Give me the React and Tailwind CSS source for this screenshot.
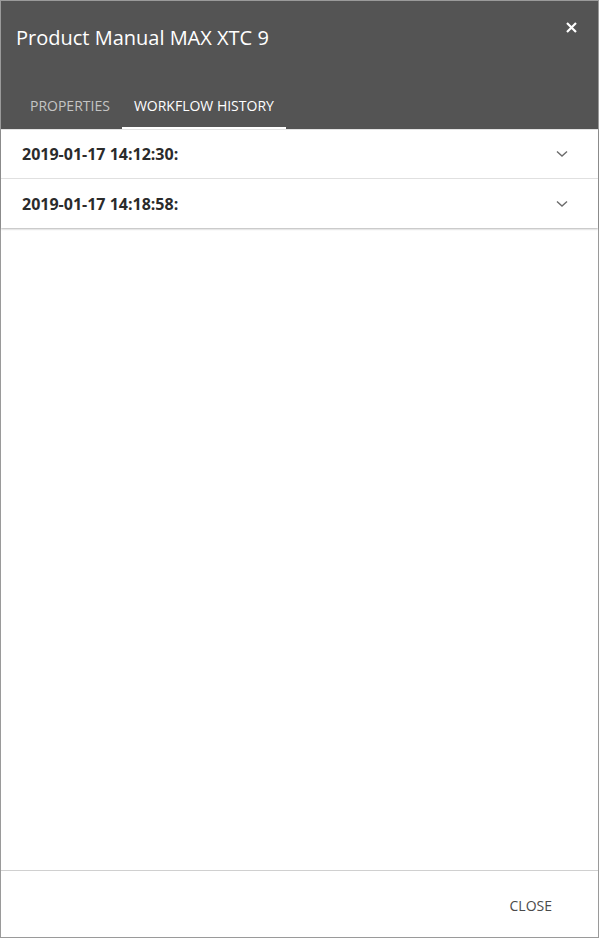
import React from 'react';

const entries = ['2019-01-17 14:12:30:', '2019-01-17 14:18:58:'];

const Chevron = () => (
    <svg width="12" height="8" viewBox="0 0 12 8" fill="none" className="text-[#6b6b6b]">
        <path d="M1 1.5 L6 6 L11 1.5" stroke="currentColor" strokeWidth="1.4" />
    </svg>
);

const App = () => {
    return (
        <div className="w-[599px] h-[938px] border border-[#9a9a9a] bg-white flex flex-col" style={{ fontFamily: '"Open Sans", sans-serif' }}>
            {/* header */}
            <div className="bg-[#545454] relative">
                <h1 className="pl-[15px] pt-[23px] h-[52px] text-[20px] leading-[28px] text-white">Product Manual MAX XTC 9</h1>
                <button className="absolute right-[20px] top-[19px] w-[14px] h-[14px] flex items-center justify-center text-white">
                    <svg width="11" height="11" viewBox="0 0 11 11">
                        <path d="M1 1 L10 10 M10 1 L1 10" stroke="currentColor" strokeWidth="2.2" />
                    </svg>
                </button>
                <div className="flex pl-[17px] mt-[28px]">
                    <div className="h-[48px] pt-[3px] px-[12px] flex items-center text-[14px] text-[#c4c4c4] uppercase border-b-2 border-transparent">Properties</div>
                    <div className="h-[48px] pt-[3px] px-[12px] flex items-center text-[14px] text-white uppercase border-b-2 border-white">Workflow History</div>
                </div>
            </div>

            {/* content */}
            <div className="flex-1">
                <div className="border-t border-[#e3e3e3] shadow-[0_1px_2px_rgba(0,0,0,0.3)]">
                    {entries.map((e, i) => (
                        <div key={i} className={`h-[49px] pl-[21px] pr-[30px] flex items-center justify-between ${i < entries.length - 1 ? 'border-b border-[#e0e0e0]' : ''}`}>
                            <span className="text-[16px] font-bold text-[#2b2b2b]">{e}</span>
                            <Chevron />
                        </div>
                    ))}
                </div>
            </div>

            {/* footer */}
            <div className="h-[67px] pt-[2px] border-t border-[#d0d0d0] flex items-center justify-end pr-[46px]">
                <button className="text-[14px] text-[#4a4a4a] uppercase">Close</button>
            </div>
        </div>
    );
};

export default App;
